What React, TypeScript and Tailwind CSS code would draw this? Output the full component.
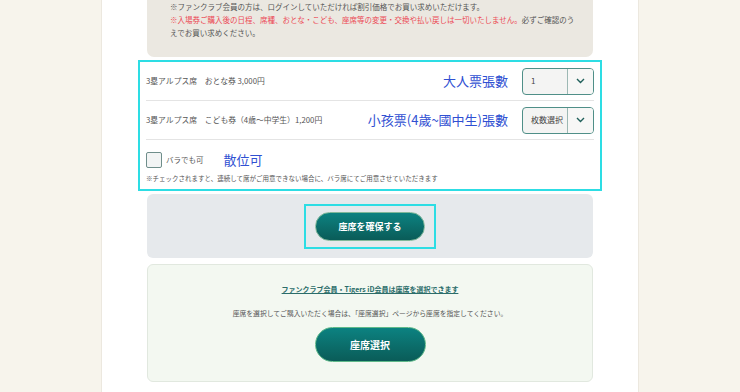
import React from "react";

const JP = "font-['Noto_Sans_CJK_JP','Noto_Sans',sans-serif]";

function Select({ value }: { value: string }) {
  return (
    <div className="flex h-[27px] w-[72px] items-stretch overflow-hidden rounded-[4px] border border-[#4f8f88] bg-[#f4f4f3]">
      <div className="flex flex-1 items-center pl-[8px] text-[8px] text-[#444]">{value}</div>
      <div className="flex w-[26px] items-center justify-center border-l border-[#9db8b4] bg-[#f7f7f6]">
        <svg width="9" height="6" viewBox="0 0 9 6">
          <path d="M1 1l3.5 3.5L8 1" fill="none" stroke="#1f5f5a" strokeWidth="1.4" />
        </svg>
      </div>
    </div>
  );
}

function TicketRow({ label, note, value }: { label: string; note: string; value: string }) {
  return (
    <div className="flex h-[39px] items-center border-b border-[#e4e4e4]">
      <span className="flex-1 text-[7.8px] text-[#555]">{label}</span>
      <span className="mr-[14px] text-[13px] text-[#3050d2]">{note}</span>
      <Select value={value} />
    </div>
  );
}

export default function App() {
  return (
    <div className={`flex h-[392px] w-[740px] justify-center overflow-hidden bg-[#f7f4ec] ${JP}`}>
      <div className="flex w-[538px] flex-col items-center border-x border-[#ece8df] bg-white">
        <div className="h-[57px] w-[446px] rounded-b-[7px] bg-[#ebe8e1] pl-[23px] pr-[4px] text-[7.5px] leading-[13px] text-[#555]">
          <p>※ファンクラブ会員の方は、ログインしていただければ割引価格でお買い求めいただけます。</p>
          <p className="whitespace-nowrap">
            <span className="text-[#ec4a56]">
              ※入場券ご購入後の日程、席種、おとな・こども、座席等の変更・交換や払い戻しは一切いたしません。
            </span>
            必ずご確認のう
            <br />
            えでお買い求めください。
          </p>
        </div>

        <div className="mt-[3px] w-[464px] border-2 border-[#2ddde4] px-[6px]">
          <TicketRow label="3塁アルプス席　おとな券 3,000円" note="大人票張數" value="1" />
          <TicketRow label="3塁アルプス席　こども券（4歳～中学生）1,200円" note="小孩票(4歲~國中生)張數" value="枚数選択" />
          <div className="flex items-center pt-[10px]">
            <div className="h-[16px] w-[16px] rounded-[2px] border border-[#6f8e8b] bg-[#f2f4f4]" />
            <span className="ml-[4px] text-[7.5px] text-[#555]">バラでも可</span>
            <span className="ml-[20px] text-[13px] text-[#3050d2]">散位可</span>
          </div>
          <p className="pb-[6px] pt-[4px] text-[6.5px] text-[#555]">
            ※チェックされますと、連続して席がご用意できない場合に、バラ席にてご用意させていただきます
          </p>
        </div>

        <div className="mt-[3px] flex h-[64px] w-[446px] items-center justify-center rounded-[6px] bg-[#e6e9ec]">
          <div className="border-2 border-[#2ddde4] px-[9px] py-[6px]">
            <button className="flex h-[29px] w-[110px] items-center justify-center rounded-full border border-[#7fb89a] bg-gradient-to-b from-[#0c8281] to-[#0a5c58] text-[9px] font-bold text-white">
              座席を確保する
            </button>
          </div>
        </div>

        <div className="mt-[6px] flex h-[118px] w-[446px] flex-col items-center rounded-[6px] border border-[#e1e8df] bg-[#f3f8f1]">
          <a className="mt-[19px] text-[7px] font-bold text-[#2b6d6a] underline">
            ファンクラブ会員・Tigers iD会員は座席を選択できます
          </a>
          <p className="mt-[13px] text-[6.8px] text-[#555]">
            座席を選択してご購入いただく場合は、「座席選択」ページから座席を指定してください。
          </p>
          <button className="mt-[9px] flex h-[35px] w-[111px] items-center justify-center rounded-full border border-[#5fb98a] bg-gradient-to-b from-[#0c8281] to-[#0a5c58] text-[10px] font-bold text-white">
            座席選択
          </button>
        </div>
      </div>
    </div>
  );
}
